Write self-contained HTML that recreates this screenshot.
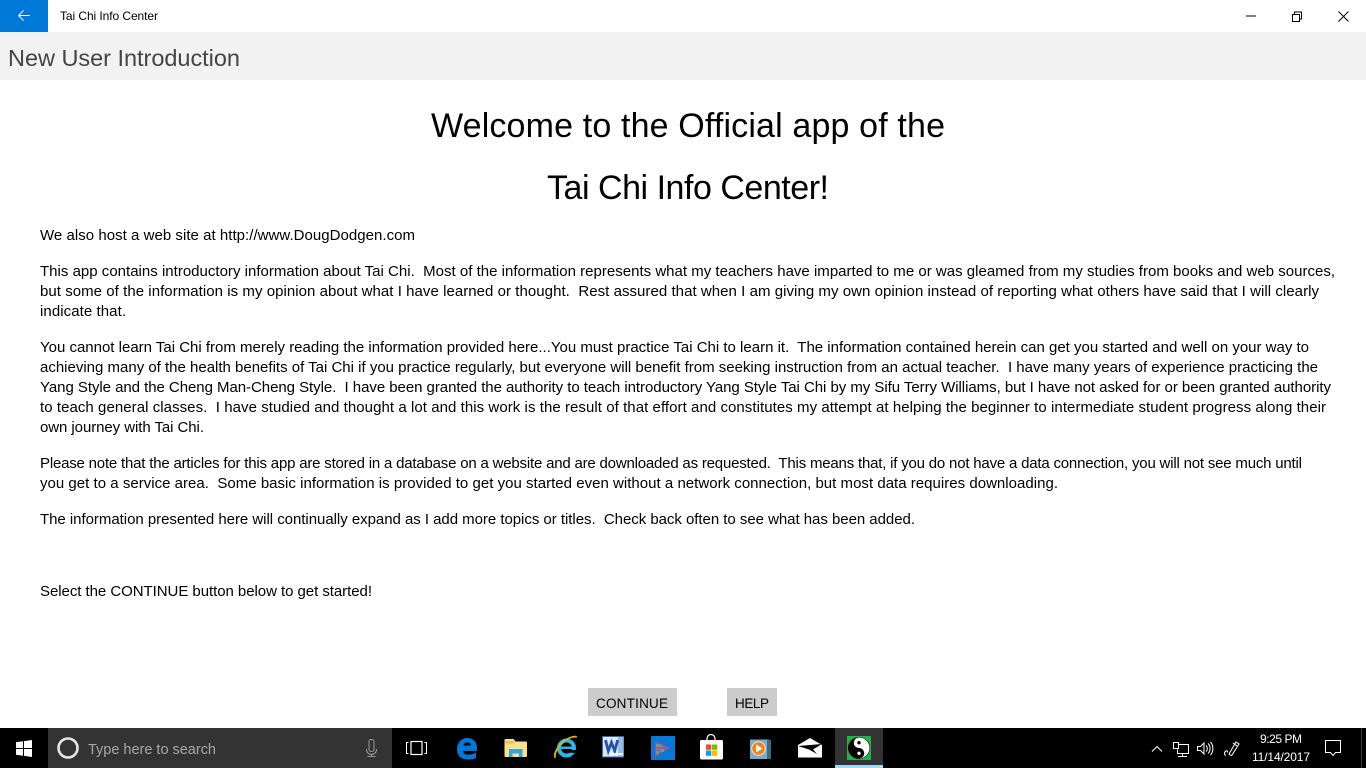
<!DOCTYPE html>
<html lang="en">
<head>
<meta charset="utf-8">
<title>Tai Chi Info Center</title>
<style>
html,body{margin:0;padding:0;background:#fff;width:1366px;height:768px;overflow:hidden}
svg{display:block}
text{font-family:"Liberation Sans",sans-serif;white-space:pre}
.b{font-size:15px;fill:#000}
.h{font-size:34px;fill:#000}
.c{font-size:13.500px;fill:#000}
</style>
</head>
<body>
<svg width="1366" height="768" viewBox="0 0 1366 768" xmlns="http://www.w3.org/2000/svg">
<rect width="1366" height="768" fill="#fff"/>
<!-- title bar -->
<rect x="0" y="0" width="48" height="32" fill="#0078d7"/>
<path d="M18.500 15.500H30M18.500 15.500l5-5M18.500 15.500l5 5" fill="none" stroke="#fff" stroke-width="1.100"/>
<text x="60" y="20" font-size="12" fill="#000" textLength="98" lengthAdjust="spacing">Tai Chi Info Center</text>
<path d="M1246 16h10" stroke="#000" stroke-width="1" fill="none"/>
<path d="M1292.500 14.500h7v7h-7zM1294.500 14.500v-2.500h7v7h-2" stroke="#000" stroke-width="1" fill="none"/>
<path d="M1338.500 11.500l10 10M1348.500 11.500l-10 10" stroke="#000" stroke-width="1" fill="none"/>
<!-- header -->
<rect x="0" y="32" width="1366" height="48" fill="#f2f2f2"/>
<text x="8" y="66" font-size="23.500" fill="#444" textLength="232" lengthAdjust="spacing">New User Introduction</text>
<!-- headings -->
<text class="h" x="431" y="137" textLength="514" lengthAdjust="spacing">Welcome to the Official app of the</text>
<text class="h" x="547" y="199" textLength="282" lengthAdjust="spacing">Tai Chi Info Center!</text>
<!-- body -->
<text class="b" x="40" y="240" textLength="375" lengthAdjust="spacing">We also host a web site at http://www.DougDodgen.com</text>
<text class="b" x="40" y="276" textLength="1295" lengthAdjust="spacing">This app contains introductory information about Tai Chi.  Most of the information represents what my teachers have imparted to me or was gleamed from my studies from books and web sources,</text>
<text class="b" x="40" y="296" textLength="1279" lengthAdjust="spacing">but some of the information is my opinion about what I have learned or thought.  Rest assured that when I am giving my own opinion instead of reporting what others have said that I will clearly</text>
<text class="b" x="40" y="316" textLength="86" lengthAdjust="spacing">indicate that.</text>
<text class="b" x="40" y="352" textLength="1269" lengthAdjust="spacing">You cannot learn Tai Chi from merely reading the information provided here...You must practice Tai Chi to learn it.  The information contained herein can get you started and well on your way to</text>
<text class="b" x="40" y="372" textLength="1278" lengthAdjust="spacing">achieving many of the health benefits of Tai Chi if you practice regularly, but everyone will benefit from seeking instruction from an actual teacher.  I have many years of experience practicing the</text>
<text class="b" x="40" y="392" textLength="1291" lengthAdjust="spacing">Yang Style and the Cheng Man-Cheng Style.  I have been granted the authority to teach introductory Yang Style Tai Chi by my Sifu Terry Williams, but I have not asked for or been granted authority</text>
<text class="b" x="40" y="412" textLength="1286" lengthAdjust="spacing">to teach general classes.  I have studied and thought a lot and this work is the result of that effort and constitutes my attempt at helping the beginner to intermediate student progress along their</text>
<text class="b" x="40" y="432" textLength="164" lengthAdjust="spacing">own journey with Tai Chi.</text>
<text class="b" x="40" y="468" textLength="1262" lengthAdjust="spacing">Please note that the articles for this app are stored in a database on a website and are downloaded as requested.  This means that, if you do not have a data connection, you will not see much until</text>
<text class="b" x="40" y="488" textLength="1018" lengthAdjust="spacing">you get to a service area.  Some basic information is provided to get you started even without a network connection, but most data requires downloading.</text>
<text class="b" x="40" y="524" textLength="875" lengthAdjust="spacing">The information presented here will continually expand as I add more topics or titles.  Check back often to see what has been added.</text>
<text class="b" x="40" y="596" textLength="332" lengthAdjust="spacing">Select the CONTINUE button below to get started!</text>
<!-- buttons -->
<rect x="588" y="688" width="89" height="28" fill="#cccccc"/>
<text class="c" x="596" y="708" textLength="72" lengthAdjust="spacing">CONTINUE</text>
<rect x="727" y="688" width="50" height="28" fill="#cccccc"/>
<text class="c" x="735" y="708" textLength="34" lengthAdjust="spacing">HELP</text>
<!-- taskbar -->
<rect x="0" y="728" width="1366" height="40" fill="#000"/>
<path d="M16 742.300l7-1v6.700h-7zM24 741.100l8-1.100v8h-8zM16 749h7v6.700l-7-1zM24 749h8v8l-8-1.100z" fill="#fff"/>
<rect x="48" y="728" width="344" height="40" fill="#333333"/>
<circle cx="68" cy="748" r="9.500" fill="none" stroke="#e6e6e6" stroke-width="2.600"/>
<text x="88" y="754" font-size="14.500" fill="#a6a6a6" textLength="128" lengthAdjust="spacing">Type here to search</text>
<path d="M369 741.500a2 2 0 0 1 2-2h1a2 2 0 0 1 2 2v8a2 2 0 0 1-2 2h-1a2 2 0 0 1-2-2zM366.500 749a5 5 0 0 0 5 5.500h0a5 5 0 0 0 5-5.500M371.500 754.500v2M367.500 756.500h8" fill="none" stroke="#9a9a9a" stroke-width="1"/>
<path d="M408.500 742.500h-2v11h2M424.500 742.500h2v11h-2" fill="none" stroke="#fff" stroke-width="1"/>
<rect x="411" y="741.500" width="11" height="13" fill="none" stroke="#fff" stroke-width="1.200"/>
<!-- edge -->
<path d="M457 749.500c0-7.500 5-11.500 10.500-11.500 6 0 9.500 4.500 9.500 10v3h-14c0 4 7 5 13 1.500v5.500c-8.500 3.500-19 1.500-19-8.500zM463.500 745.500h7.500c0-4-7-4-7.500 0z" fill="#0078d7" fill-rule="evenodd"/>
<!-- explorer -->
<path d="M505.500 739h8l2 2.500h10.500a1 1 0 0 1 1 1v13.500a1 1 0 0 1-1 1h-20.500a1 1 0 0 1-1-1v-16a1 1 0 0 1 1-1z" fill="#fbe08e"/>
<path d="M505 741h8.500l1 2.500h-9.500z" fill="#e2c25f"/>
<path d="M509 757v-8h13.500v8h-3.500v-3.500h-6.500v3.500z" fill="#38a4dd"/>
<!-- IE -->
<circle cx="566.500" cy="748" r="7.500" fill="none" stroke="#30b4e8" stroke-width="4"/>
<rect x="560" y="746.500" width="14" height="2.500" fill="#30b4e8"/>
<rect x="569" y="750" width="9" height="2.800" fill="#000"/>
<path d="M555.500 757.500c-2.500-2 2.500-12.500 9-17 6-3.500 11.500-5 12-3" fill="none" stroke="#d9b321" stroke-width="1.800"/>
<!-- word -->
<rect x="602" y="736" width="22" height="21.500" fill="#dfe9f6"/>
<rect x="602.500" y="736.500" width="21" height="20.500" fill="none" stroke="#3569b5" stroke-width="1"/>
<path d="M618 737h5.500v19h-5.500z" fill="#9db9de"/>
<path d="M605.500 740l2.800 11 3.200-8.500 3.200 8.500 3-11" fill="none" stroke="#1f55ad" stroke-width="2.800"/>
<path d="M610 754h13" stroke="#fff" stroke-width="1.500"/>
<!-- video app -->
<rect x="651" y="736" width="24" height="24" fill="#0a78d4"/>
<path d="M655 741l15 7-15 9z" fill="#8b5ca0"/>
<path d="M656 744h4v3h-4zM660 749h4v3h-4zM656 751h3v3h-3z" fill="#5aa87a"/>
<path d="M660 745h3v3h-3zM656 748h3v2h-3z" fill="#c85a9a"/>
<!-- store -->
<path d="M707 741v-2.500a4 4 0 0 1 8 0v2.500" fill="none" stroke="#fff" stroke-width="1.200"/>
<rect x="700" y="740" width="23" height="19.500" rx="1.500" fill="#fff"/>
<rect x="706" y="744.500" width="5.300" height="5.300" fill="#f25022"/>
<rect x="712" y="744.500" width="5.300" height="5.300" fill="#7fba00"/>
<rect x="706" y="750.500" width="5.300" height="5.300" fill="#00a4ef"/>
<rect x="712" y="750.500" width="5.300" height="5.300" fill="#ffb900"/>
<!-- media -->
<rect x="750" y="739.500" width="19" height="19.500" fill="#78aecb"/>
<rect x="767" y="740" width="4" height="19" fill="#3f6a84"/>
<circle cx="758.500" cy="748.500" r="6.800" fill="#f08122" stroke="#fbe3cd" stroke-width="1"/>
<path d="M756 744.500l6.500 4-6.500 4z" fill="#fff"/>
<!-- mail -->
<path d="M798 745l12-7 12 7v12.500h-24z" fill="#fff"/>
<path d="M798 746l24-2-9 5.500 4 4.500-8-4.500z" fill="#000"/>
<!-- active app -->
<rect x="835" y="728" width="48" height="37" fill="#333333"/>
<rect x="835" y="765" width="48" height="3" fill="#a6d8f8"/>
<rect x="847" y="736" width="24" height="24" fill="#22b14c"/>
<circle cx="859" cy="748" r="11" fill="#000"/>
<path d="M859 737.500a10.500 10.500 0 0 1 0 21a5.250 5.250 0 0 0 0-10.500a5.250 5.250 0 0 1 0-10.500z" fill="#fff"/>
<circle cx="859" cy="742.700" r="1.700" fill="#000"/>
<circle cx="859" cy="753.300" r="1.700" fill="#fff"/>
<!-- tray -->
<path d="M1152 751.500l5-5 5 5" fill="none" stroke="#fff" stroke-width="1"/>
<path d="M1178.500 744.500h10v9h-11v-4M1173.500 742.500h5v6h-5zM1182.500 753.500v3M1178 756.500h9" fill="none" stroke="#fff" stroke-width="1"/>
<path d="M1197.500 746.500h3l3.500-3.500v11l-3.500-3.500h-3zM1206 745.500a4 4 0 0 1 0 6M1208 743.500a7 7 0 0 1 0 10M1210.500 742a10 10 0 0 1 0 13" fill="none" stroke="#fff" stroke-width="1"/>
<path d="M1226 755c-2 1-2-3 0-4 1-.5 2 0 1.500 1.500M1229 754l7-12 3 2-7 11c-1 1-2 0-3-1zM1233 743l4 3" fill="none" stroke="#fff" stroke-width="1"/>
<text x="1260" y="743" font-size="12" fill="#fff" textLength="42" lengthAdjust="spacing">9:25 PM</text>
<text x="1252" y="761" font-size="12" fill="#fff" textLength="58" lengthAdjust="spacing">11/14/2017</text>
<path d="M1325.500 740.500h15v12h-5l-2.500 3-2.500-3h-5z" fill="none" stroke="#fff" stroke-width="1"/>
<rect x="1361" y="728" width="1" height="40" fill="#3a3a3a"/>
</svg>
</body>
</html>
